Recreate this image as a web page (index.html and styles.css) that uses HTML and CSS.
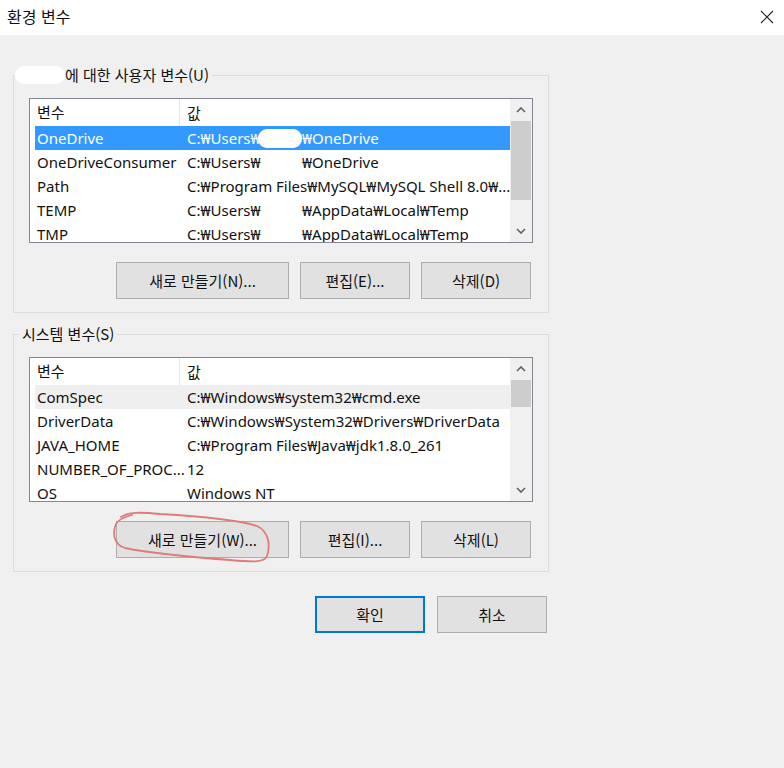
FILE: index.html
```html
<!DOCTYPE html>
<html lang="ko">
<head>
    <meta charset="UTF-8">
    <meta name="viewport" content="width=device-width, initial-scale=1.0">
    <title>환경 변수</title>
    <link rel="stylesheet" href="styles.css">
</head>
<body>
    <div class="window">
        <div class="titlebar">
            <span class="title">환경 변수</span>
            <svg class="close" width="14" height="14" viewBox="0 0 14 14">
                <path d="M1 1 L13 13 M13 1 L1 13" stroke="#222" stroke-width="1.1" fill="none"/>
            </svg>
        </div>

        <div class="content">
            <!-- user variables -->
            <fieldset class="group">
                <legend><span class="blob legend-blob"></span>에 대한 사용자 변수(U)</legend>
                <div class="group-inner">
                    <div class="list">
                        <div class="rows">
                            <div class="row head"><span class="c1">변수</span><span class="c2">값</span></div>
                            <div class="row selected"><span class="c1">OneDrive</span><span class="c2"><span class="user">C:₩Users₩<span class="blob row-blob"></span></span>₩OneDrive</span></div>
                            <div class="row"><span class="c1">OneDriveConsumer</span><span class="c2"><span class="user">C:₩Users₩</span>₩OneDrive</span></div>
                            <div class="row"><span class="c1">Path</span><span class="c2">C:₩Program Files₩MySQL₩MySQL Shell 8.0₩...</span></div>
                            <div class="row"><span class="c1">TEMP</span><span class="c2"><span class="user">C:₩Users₩</span>₩AppData₩Local₩Temp</span></div>
                            <div class="row"><span class="c1">TMP</span><span class="c2"><span class="user">C:₩Users₩</span>₩AppData₩Local₩Temp</span></div>
                        </div>
                        <div class="scrollbar">
                            <div class="arrow"><svg width="10" height="6" viewBox="0 0 10 6"><path d="M1 5 L5 1 L9 5" stroke="#606060" stroke-width="1.6" fill="none"/></svg></div>
                            <div class="track"><div class="thumb thumb-user"></div></div>
                            <div class="arrow"><svg width="10" height="6" viewBox="0 0 10 6"><path d="M1 1 L5 5 L9 1" stroke="#606060" stroke-width="1.6" fill="none"/></svg></div>
                        </div>
                    </div>
                    <div class="buttons">
                        <button class="btn wide">새로 만들기(N)...</button>
                        <button class="btn">편집(E)...</button>
                        <button class="btn">삭제(D)</button>
                    </div>
                </div>
            </fieldset>

            <!-- system variables -->
            <fieldset class="group">
                <legend>시스템 변수(S)</legend>
                <div class="group-inner">
                    <div class="list">
                        <div class="rows">
                            <div class="row head"><span class="c1">변수</span><span class="c2">값</span></div>
                            <div class="row hover"><span class="c1">ComSpec</span><span class="c2">C:₩Windows₩system32₩cmd.exe</span></div>
                            <div class="row"><span class="c1">DriverData</span><span class="c2">C:₩Windows₩System32₩Drivers₩DriverData</span></div>
                            <div class="row"><span class="c1">JAVA_HOME</span><span class="c2">C:₩Program Files₩Java₩jdk1.8.0_261</span></div>
                            <div class="row"><span class="c1">NUMBER_OF_PROC...</span><span class="c2">12</span></div>
                            <div class="row"><span class="c1">OS</span><span class="c2">Windows NT</span></div>
                        </div>
                        <div class="scrollbar">
                            <div class="arrow"><svg width="10" height="6" viewBox="0 0 10 6"><path d="M1 5 L5 1 L9 5" stroke="#606060" stroke-width="1.6" fill="none"/></svg></div>
                            <div class="track"><div class="thumb thumb-system"></div></div>
                            <div class="arrow"><svg width="10" height="6" viewBox="0 0 10 6"><path d="M1 1 L5 5 L9 1" stroke="#606060" stroke-width="1.6" fill="none"/></svg></div>
                        </div>
                    </div>
                    <div class="buttons">
                        <button class="btn wide">새로 만들기(W)...</button>
                        <button class="btn">편집(I)...</button>
                        <button class="btn">삭제(L)</button>
                    </div>
                </div>
            </fieldset>

            <div class="dialog-buttons">
                <button class="btn default">확인</button>
                <button class="btn">취소</button>
            </div>
        </div>

        <!-- hand-drawn circle over the new button -->
        <svg class="scribble" width="784" height="768" viewBox="0 0 784 768">
            <path d="M121 517 C128 512 140 512 160 514 C195 516 235 519 257 526 C268 531 271 544 267 556 C264 563 252 562 230 560 C190 557 150 553 125 548 C114 545 112 533 116 524 C118 520 124 517 132 515"
                  stroke="#df7b7b" stroke-width="1.8" fill="none" stroke-linecap="round"/>
        </svg>
    </div>
</body>
</html>
```

FILE: styles.css
```css
body {
    margin: 0;
    background-color: #f0f0f0;
    font-family: "Noto Sans", "Noto Sans CJK KR", sans-serif;
    font-size: 15px;
    color: #111;
}
.window {
    position: relative;
    width: 784px;
    height: 768px;
    background-color: #f0f0f0;
}
.titlebar {
    height: 35px;
    background-color: #fff;
    display: flex;
    align-items: center;
    justify-content: space-between;
    padding: 0 10px 0 7px;
}
.title {
    font-family: "Noto Sans CJK KR", sans-serif;
    font-size: 16px;
    color: #111;
    margin-top: -3px;
}
.close {
    margin-top: -2px;
}
.content {
    padding: 30px 0 0 13px;
    display: flex;
    flex-direction: column;
    gap: 11px;
    width: 536px;
}
.group {
    margin: 0;
    padding: 0;
    border: 1px solid #dcdcdc;
    min-width: 0;
}
.group legend {
    margin-left: 5px;
    padding: 0 3px;
    height: 20px;
    line-height: 20px;
    font-family: "Noto Sans CJK KR", sans-serif;
    font-size: 15px;
    display: flex;
    align-items: center;
}
.blob {
    display: inline-block;
    background-color: #fff;
    border-radius: 9px;
}
.legend-blob {
    width: 50px;
    height: 18px;
    margin-left: -7px;
}
.group-inner {
    padding: 13px 15px 13px 15px;
}
.list {
    display: flex;
    height: 145px;
    box-sizing: border-box;
    border: 1px solid #828790;
    background-color: #fff;
    overflow: hidden;
}
.rows {
    flex: 1;
    padding-left: 5px;
    min-width: 0;
}
.row {
    display: flex;
    height: 24px;
    line-height: 24px;
    white-space: nowrap;
}
.row.head {
    height: 27px;
    line-height: 25px;
    font-family: "Noto Sans CJK KR", sans-serif;
}
.row.head .c1 {
    border-right: 1px solid #e5e5e5;
}
.row.selected {
    background-color: #3399ff;
    color: #fff;
}
.row.hover {
    background-color: #efefef;
}
.c1 {
    width: 145px;
    flex-shrink: 0;
    padding-left: 2px;
    box-sizing: border-box;
}
.c2 {
    padding-left: 7px;
    display: flex;
    align-items: center;
}
.user {
    display: inline-flex;
    align-items: center;
    width: 115px;
}
.row-blob {
    width: 48px;
    height: 19px;
    margin-left: -3px;
}
.scrollbar {
    width: 22px;
    display: flex;
    flex-direction: column;
    background-color: #f0f0f0;
}
.arrow {
    height: 22px;
    display: flex;
    align-items: center;
    justify-content: center;
}
.track {
    flex: 1;
    padding: 0 1px;
}
.thumb {
    background-color: #cdcdcd;
}
.thumb-user {
    height: 79px;
}
.thumb-system {
    height: 27px;
}
.buttons {
    display: flex;
    justify-content: flex-end;
    gap: 11px;
    margin-top: 19px;
    padding-right: 2px;
}
.btn {
    width: 110px;
    height: 37px;
    background-color: #e1e1e1;
    border: 1px solid #adadad;
    font-family: "Noto Sans CJK KR", sans-serif;
    font-size: 15px;
    color: #111;
    padding: 0;
}
.btn.wide {
    width: 173px;
}
.btn.default {
    border: 2px solid #0078d7;
}
.dialog-buttons {
    display: flex;
    justify-content: flex-end;
    gap: 12px;
    margin-top: 13px;
    padding-right: 2px;
}
.scribble {
    position: absolute;
    left: 0;
    top: 0;
    pointer-events: none;
}
```
